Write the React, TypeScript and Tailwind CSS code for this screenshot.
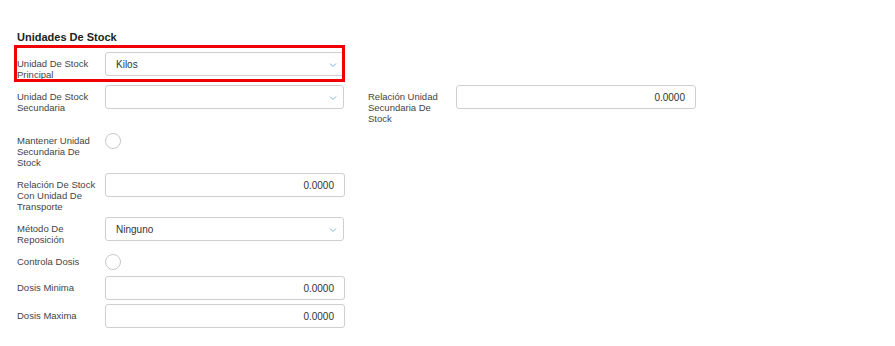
const Chevron = () => (
  <svg width="8" height="5" viewBox="0 0 8 5" className="absolute right-[6px] top-1/2 -translate-y-1/2 mt-[1px]">
    <polyline points="1,1 4,4 7,1" fill="none" stroke="#7eaae2" strokeWidth="1" />
  </svg>
);

const Label = ({ text }: { text: string }) => (
  <div className="w-[88px] shrink-0 pr-[4px] pt-[6px] pb-[1px] text-[9.5px] leading-[11px] text-[#444]">{text}</div>
);

const Select = ({ value }: { value: string }) => (
  <div className="relative flex h-[24px] w-[239px] items-center rounded-[3px] border border-[#cfcfcf] bg-white pl-[10px] text-[10px] text-[#333]">
    {value}
    <Chevron />
  </div>
);

const NumberInput = ({ value }: { value: string }) => (
  <div className="flex h-[24px] w-[240px] items-center justify-end rounded-[3px] border border-[#cfcfcf] bg-white pr-[10px] text-[10px] text-[#333]">
    {value}
  </div>
);

const Circle = () => (
  <div className="h-[22px] pt-[4px]">
    <div className="h-[16px] w-[16px] rounded-full border border-[#c8c8c8] bg-white" />
  </div>
);

const Field = ({ label, children }: { label: string; children: React.ReactNode }) => (
  <div className="flex w-[328px] items-start">
    <Label text={label} />
    {children}
  </div>
);

export default function App() {
  return (
    <div className="min-h-screen bg-white pl-[17px] pt-[30px] font-['Liberation_Sans',Arial,sans-serif]">
      <h2 className="mb-[8px] text-[11px] font-bold leading-[14px] text-[#222]">Unidades De Stock</h2>
      <div className="flex flex-col gap-[4px]">
        <div className="relative flex w-[328px] items-start">
          <Label text="Unidad De Stock Principal" />
          <Select value="Kilos" />
          <div className="pointer-events-none absolute -left-[3px] -top-[7px] -bottom-[1px] right-0 border-[3px] border-[#f00000]" />
        </div>
        <div className="flex items-start gap-[23px]">
          <Field label="Unidad De Stock Secundaria">
            <Select value="" />
          </Field>
          <Field label="Relación Unidad Secundaria De Stock">
            <NumberInput value="0.0000" />
          </Field>
        </div>
        <Field label="Mantener Unidad Secundaria De Stock">
          <Circle />
        </Field>
        <Field label="Relación De Stock Con Unidad De Transporte">
          <NumberInput value="0.0000" />
        </Field>
        <Field label="Método De Reposición">
          <Select value="Ninguno" />
        </Field>
        <Field label="Controla Dosis">
          <Circle />
        </Field>
        <Field label="Dosis Minima">
          <NumberInput value="0.0000" />
        </Field>
        <Field label="Dosis Maxima">
          <NumberInput value="0.0000" />
        </Field>
      </div>
    </div>
  );
}
